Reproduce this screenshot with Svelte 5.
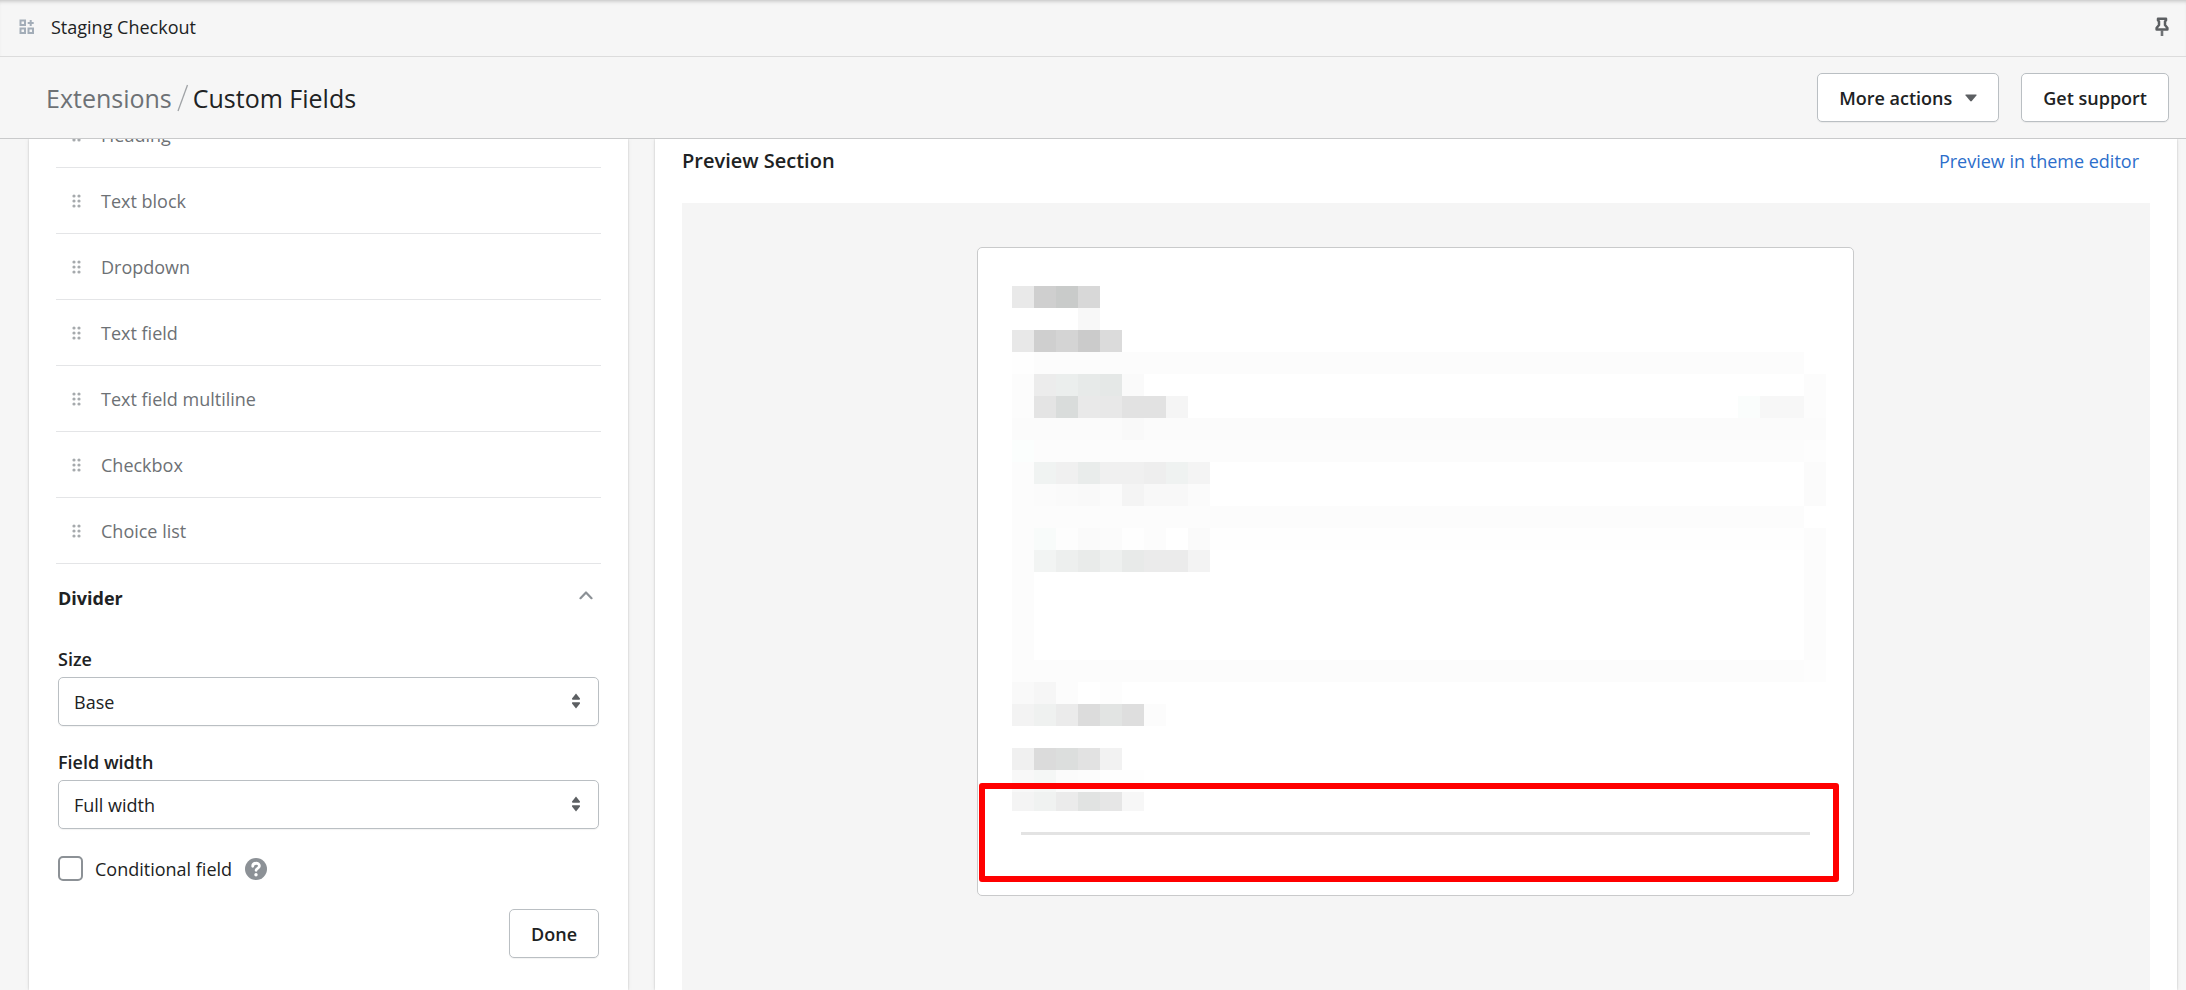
<script>
  const blocks = ['Text block', 'Dropdown', 'Text field', 'Text field multiline', 'Checkbox', 'Choice list'];
  const dots = [[1, 1], [6, 1], [1, 6], [6, 6], [1, 11], [6, 11]];
  let size = $state('Base');
  let width = $state('Full width');
  let conditional = $state(false);

  // Placeholder tiles: [column, row, columns, rows, colour] in units of 22
  const tiles = [
    [1, 3, 35, 1, '#fcfcfc'], [0, 3, 1, 1, '#fefefe'],
    [0, 4, 1, 2, '#fcfcfc'], [36, 4, 1, 2, '#fcfcfc'],
    [0, 6, 37, 1, '#fbfbfb'], [5, 6, 1, 1, '#f9f9f9'],
    [0, 7, 1, 1, '#fbfefd'], [1, 7, 35, 1, '#fcfcfc'], [36, 7, 1, 1, '#fdfdfd'],
    [0, 8, 1, 2, '#fcfcfc'], [36, 8, 1, 2, '#fbfbfb'],
    [0, 10, 36, 1, '#fcfcfc'],
    [0, 11, 1, 6, '#fcfcfc'], [36, 11, 1, 6, '#fcfcfc'], [1, 11, 35, 1, '#fefefe'],
    [0, 17, 36, 1, '#fcfcfc'], [36, 17, 1, 1, '#fdfdfd'],
    [33, 5, 1, 1, '#fafdfc'], [34, 5, 2, 1, '#f7f7f7']
  ];
  // Tile runs: [first column, row, colours]
  const runs = [
    [0, 0, ['#e9e9e9', '#cfcfcf', '#c9cbca', '#d8d8d8']],
    [3, 1, ['#f8f8f8']],
    [0, 2, ['#e8e8e8', '#cfcfcf', '#d4d4d4', '#cbcbcb', '#dbdbdb']],
    [1, 4, ['#ececec', '#ebeeed', '#e7eae9', '#e5e8e7', '#fafafa']],
    [1, 5, ['#e4e4e4', '#d9dcdb', '#e9e9e9', '#e8e8e8', '#e2e2e2', '#e2e2e2', '#f5f5f5']],
    [1, 8, ['#f0f3f2', '#f0f0f0', '#e9eceb', '#f0f0f0', '#f0f0f0', '#eeeeee', '#eff2f1', '#f4f4f4']],
    [1, 9, ['#fbfbfb', '#fafafa', '#f9f9f9', '#fbfbfb', '#f4f4f4', '#f8f8f8', '#f8f8f8', '#fbfbfb']],
    [1, 11, ['#f8fbfa', '#fdfdfd', '#fafafa', '#fbfbfb', '#fefefe', '#fcfcfc', '#ffffff', '#fafafa']],
    [1, 12, ['#f2f4f3', '#edefee', '#e9ebea', '#eef0ef', '#e8eae9', '#ebebeb', '#ebebeb', '#f3f3f3']],
    [0, 18, ['#f9f9f9', '#f6f6f6', '#fcfcfc', '#ffffff', '#fdfdfd']],
    [0, 19, ['#f3f3f3', '#eff1f0', '#ebebeb', '#dcdcdc', '#e2e4e3', '#dedede', '#fcfcfc']],
    [0, 21, ['#f0f0f0', '#dbdbdb', '#dcdedd', '#e2e2e2', '#f2f2f2']],
    [0, 22, ['#f8f8f8', '#f5f7f6', '#fbfbfb', '#fcfcfc', '#fefefe', '#fefefe']],
    [0, 23, ['#f4f4f4', '#f0f2f1', '#ebebeb', '#e1e3e2', '#e6e6e6', '#f7f7f7']]
  ];
</script>

{#snippet grip()}
  <svg class="grip" viewBox="0 0 9 14" width="9" height="14" aria-hidden="true">
    {#each dots as [x, y]}
      <circle cx={x + 1} cy={y + 1} r="1.6" fill="#a6aaad" />
    {/each}
  </svg>
{/snippet}

{#snippet arrows()}
  <svg class="arrows" viewBox="0 0 10 16" width="10" height="16" aria-hidden="true">
    <path d="M5 0.5 9 5.6Q9.300 6.700 8.300 6.700H1.700Q0.700 6.700 1 5.600ZM5 15.500 9 10.400Q9.300 9.300 8.300 9.300H1.700Q0.700 9.300 1 10.400Z" fill="#5c5f62" />
  </svg>
{/snippet}

<div class="app">
  <header class="top">
    <svg class="appicon" viewBox="0 0 16 16" width="16" height="16" aria-hidden="true">
      <path d="M1.500 1.500h4.500v4.500H1.500zM1.500 9.500h4.500v4.500H1.500zM9.500 9.500H14v4.500H9.500zM11.700 1v6M8.700 4h6" fill="none" stroke="#a3adb8" stroke-width="2" />
    </svg>
    <span class="appname">Staging Checkout</span>
    <button class="pin" aria-label="Pin app">
      <svg viewBox="0 0 14 20" width="14" height="20" aria-hidden="true">
        <path d="M3 1.700h8v1.500l-1 1.300v3.500l2.400 3v1.500H1.600V11L4 8V4.500L3 3.200z" fill="none" stroke="#5c5f62" stroke-width="2.500" stroke-linejoin="round" />
        <path d="M7 13v6" stroke="#6f7275" stroke-width="2.600" />
      </svg>
    </button>
  </header>

  <header class="title">
    <nav aria-label="Breadcrumb">
      <a href="#extensions">Extensions</a>
      <svg viewBox="0 0 12 28" width="12" height="28" aria-hidden="true"><path d="M1 27 10.500 1" stroke="#a0a3a6" stroke-width="1.300" /></svg>
      <h1>Custom Fields</h1>
    </nav>
    <div class="actions">
      <button class="btn">More actions
        <svg viewBox="0 0 12 8" width="12" height="8" aria-hidden="true"><path d="M1 .5h10q1 0 .4 1L6.800 7q-.8.800-1.600 0L.6 1.500Q0 .5 1 .5z" fill="#5c5f62" /></svg>
      </button>
      <button class="btn">Get support</button>
    </div>
  </header>

  <main>
    <section class="card side">
      <ul>
        <li class="first">{@render grip()}Heading</li>
        {#each blocks as block}
          <li>{@render grip()}{block}</li>
        {/each}
      </ul>
      <div class="form">
        <button class="toggle" aria-expanded="true">Divider
          <svg viewBox="0 0 14 10" width="14" height="10" aria-hidden="true"><path d="M1.500 8.200 7 2.500l5.500 5.700" fill="none" stroke="#8c9196" stroke-width="2.200" stroke-linecap="round" stroke-linejoin="round" /></svg>
        </button>
        <div class="field">
          <label for="size">Size</label>
          <div class="select">
            <select id="size" bind:value={size}><option>Base</option></select>
            {@render arrows()}
          </div>
        </div>
        <div class="field">
          <label for="width">Field width</label>
          <div class="select">
            <select id="width" bind:value={width}><option>Full width</option></select>
            {@render arrows()}
          </div>
        </div>
        <div class="check">
          <input id="conditional" type="checkbox" bind:checked={conditional} />
          <label for="conditional">Conditional field</label>
          <svg viewBox="0 0 22 22" width="22" height="22" aria-hidden="true">
            <circle cx="11" cy="11" r="11" fill="#8c9196" />
            <path d="M7.700 8.300c0-4 6.700-4 6.700-.3 0 2.300-3.300 2.300-3.300 4.300" fill="none" stroke="#fff" stroke-width="2.800" stroke-linecap="round" />
            <circle cx="11" cy="16.800" r="1.700" fill="#fff" />
          </svg>
        </div>
        <button class="btn done">Done</button>
      </div>
    </section>

    <section class="card preview">
      <div class="head">
        <h2>Preview Section</h2>
        <a href="#theme">Preview in theme editor</a>
      </div>
      <div class="canvas">
        <div class="sheet">
          <svg class="tiles" viewBox="0 0 814 525" shape-rendering="crispEdges" aria-hidden="true">
            {#each tiles as [x, y, w, h, fill]}
              <rect x={x * 22} y={y * 22} width={w * 22} height={h * 22} {fill} />
            {/each}
            {#each runs as [x, y, colours]}
              {#each colours as fill, i}
                <rect x={(x + i) * 22} y={y * 22} width="22" height="22" {fill} />
              {/each}
            {/each}
          </svg>
          <hr />
          <div class="highlight"></div>
        </div>
      </div>
    </section>
  </main>
</div>

<style>
  :global(body) { margin: 0; background: #f6f6f6; overflow: hidden; }
  .app {
    height: 100vh; display: flex; flex-direction: column; overflow: hidden;
    font: 18px/24px "Segoe UI", "Open Sans", "Noto Sans", sans-serif; color: #202223;
  }
  * { box-sizing: border-box; }
  button, select { font: inherit; color: inherit; }
  h1, h2, ul { margin: 0; padding: 0; }
  a { text-decoration: none; }
  svg { display: block; flex: none; }
  .top {
    flex: none; height: 57px; display: flex; align-items: center; padding: 0 17px 2px 19px;
    border-bottom: 1px solid #dcdcdc; box-shadow: inset 0 4px 4px -3px #bbb;
  }
  .appname { margin-left: 16px; }
  .pin { margin-left: auto; padding: 0; border: 0; background: none; }
  .title {
    flex: none; height: 82px; display: flex; align-items: center; justify-content: space-between;
    padding: 0 17px 0 46px; border-bottom: 1px solid #c9cacb;
  }
  nav { display: flex; align-items: center; font-size: 25px; line-height: 32px; }
  nav a { color: #6d7175; }
  nav svg { margin: 0 4px 0 5px; }
  h1 { font: inherit; }
  .actions { display: flex; gap: 22px; }
  .btn {
    height: 49px; padding: 0 21px; display: flex; align-items: center; gap: 13px; font-weight: 600;
    background: #fff; border: 1px solid #babfc3; border-radius: 5px; box-shadow: 0 1px 1px #0000000d;
  }
  main { flex: 1; min-height: 0; display: flex; gap: 27px; padding: 0 9px 0 29px; overflow: hidden; }
  .card { background: #fff; box-shadow: 0 0 6px #1718180d, 0 0 2px #00000033; }
  .side { flex: 0 0 599px; padding: 0 27px; }
  ul { list-style: none; }
  li {
    height: 66px; display: flex; align-items: center; gap: 20px; padding: 0 16px;
    border-bottom: 1px solid #e4e5e7; color: #6d7175;
  }
  .first { margin-top: -37px; }
  .form { display: flex; flex-direction: column; padding: 22px 2px; }
  .toggle {
    display: flex; justify-content: space-between; align-items: center; width: 100%;
    padding: 0 6px 0 0; margin-bottom: 37px; border: 0; background: none; font-weight: 700;
  }
  .toggle svg { margin-bottom: 6px; }
  .field { margin-bottom: 24px; }
  .field label { display: block; font-weight: 600; margin-bottom: 6px; }
  .select { position: relative; }
  select {
    display: block; width: 100%; height: 49px; padding: 0 15px; appearance: none; background: #fff;
    border: 1px solid #babfc3; border-radius: 5px; box-shadow: 0 1px 1px #0000000d;
  }
  .select :global(.arrows) { position: absolute; right: 18px; top: 16px; pointer-events: none; }
  .check { display: flex; align-items: center; margin: 3px 0 28px; }
  .check input { appearance: none; width: 25px; height: 25px; margin: 0 12px 0 0; border: 2px solid #8c9196; border-radius: 5px; }
  .check svg { margin-left: 13px; }
  .done { align-self: flex-end; }
  .preview { flex: 1; display: flex; flex-direction: column; padding: 10px 27px 0; }
  .head { display: flex; justify-content: space-between; padding-right: 11px; margin-bottom: 30px; }
  h2 { font-size: 20px; line-height: 24px; font-weight: 600; }
  .head a { color: #2c6ecb; }
  .canvas { flex: 1; background: #f5f5f5; padding: 44px 1px 0 0; }
  .sheet {
    position: relative; max-width: 877px; margin: 0 auto; padding: 38px 27px 60px 34px;
    background: #fff; border: 1px solid #c9cacb; border-radius: 5px;
  }
  .tiles { width: 100%; height: auto; }
  hr { margin: 21px 16px 0 9px; height: 3px; border: 0; background: #e3e3e3; }
  .highlight { position: absolute; left: 1px; right: 14px; bottom: 13px; height: 99px; border: 6px solid #f00; border-radius: 3px; }
</style>
